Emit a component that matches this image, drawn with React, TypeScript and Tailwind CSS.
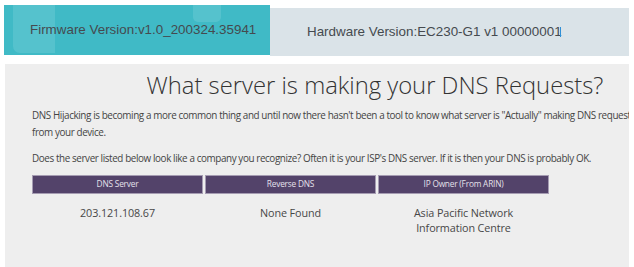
import React from "react";

const rows = [
  { server: "203.121.108.67", reverse: "None Found", owner: ["Asia Pacific Network", "Information Centre"] },
];

export default function App() {
  return (
    <div className="w-[634px] h-[267px] overflow-hidden bg-white">
      {/* version bar */}
      <div className="flex pt-[5px] pl-[4px] pr-[5px] font-['Liberation_Sans',Arial,sans-serif] text-[13.4px] text-[#454a4f]">
        <div className="relative w-[266px] h-[50px] bg-[#40bac6] flex items-center pl-[26px]">
          <div className="absolute left-[9px] top-0 w-[42px] h-[48px] rounded-bl-[7px] bg-[#5ec6d0]/70" />
          <div className="absolute left-[189px] top-0 w-[28px] h-[17px] rounded-b-[5px] bg-[#5ec6d0]/70" />
          <span className="relative">Firmware Version:v1.0_200324.35941</span>
        </div>
        <div className="relative flex-1 mt-[3px] h-[48px] bg-[#dae3e8] flex items-center pl-[37px]">
          <span>Hardware Version:EC230-G1 v1 00000001</span>
          <div className="absolute left-[290px] top-[19px] w-[1px] h-[10px] bg-[#2f8fd6]" />
        </div>
      </div>

      {/* dns check */}
      <div className="mt-[8px] mx-[5px] h-[210px] bg-[#eeeeee] overflow-hidden font-['Open_Sans',sans-serif] text-[#444]">
        <div className="w-[740px] px-[27px]">
          <h1 className="text-center font-light text-[23.8px] leading-[36px] pt-[3px] text-[#333]">
            What server is making your DNS Requests?
          </h1>
          <p className="mt-[4px] w-[622px] text-[9.9px] tracking-[-0.4px] leading-[17px]">
            DNS Hijacking is becoming a more common thing and until now there hasn't been a tool to know what server is "Actually" making DNS requests from your device.
          </p>
          <p className="mt-[9px] text-[9.9px] tracking-[-0.4px] leading-[17px] whitespace-nowrap">
            Does the server listed below look like a company you recognize? Often it is your ISP's DNS server. If it is then your DNS is probably OK.
          </p>
          <table className="mt-[6px] ml-[-2px] border-separate border-spacing-[2px] text-center">
            <thead>
              <tr>
                {["DNS Server", "Reverse DNS", "IP Owner (From ARIN)"].map(h => (
                  <th
                    key={h}
                    className="w-[171px] h-[19px] p-0 bg-[#53436a] border border-[#a59cb2] text-[8.3px] tracking-[-0.2px] font-normal text-[#e4e0ea]"
                  >
                    {h}
                  </th>
                ))}
              </tr>
            </thead>
            <tbody>
              {rows.map(r => (
                <tr key={r.server} className="align-top text-[10.8px] tracking-[-0.1px] leading-[15px] text-[#474747]">
                  <td className="pt-[9px]">{r.server}</td>
                  <td className="pt-[9px]">{r.reverse}</td>
                  <td className="pt-[9px]">
                    {r.owner.map(l => (
                      <div key={l}>{l}</div>
                    ))}
                  </td>
                </tr>
              ))}
            </tbody>
          </table>
        </div>
      </div>
    </div>
  );
}
